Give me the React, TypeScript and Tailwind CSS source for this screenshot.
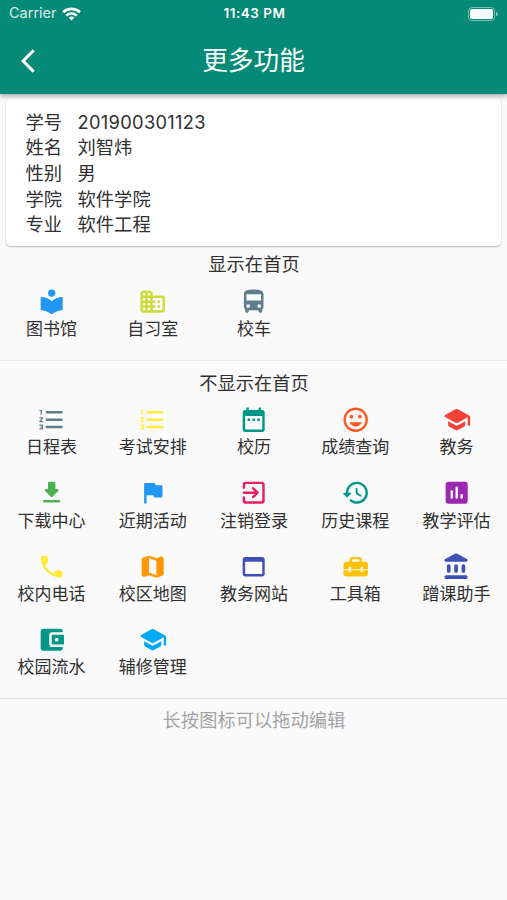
import type { ComponentType } from "react";
import {
  MdArrowBackIosNew,
  MdDateRange,
  MdInsertEmoticon,
  MdWebAsset,
} from "react-icons/md";

type IconProps = { className?: string };
type Feature = { label: string; icon: ComponentType<IconProps>; color: string };

/** Builds a 24-unit filled icon with rounded corners. */
function rounded(...paths: string[]) {
  return function RoundedIcon({ className }: IconProps) {
    return (
      <svg className={className} viewBox="0 0 24 24" fill="currentColor">
        {paths.map((d) => (
          <path key={d} d={d} />
        ))}
      </svg>
    );
  };
}

const Library = rounded(
  "M12 8a3 3 0 1 0 0-6 3 3 0 0 0 0 6z",
  "M12 11.55C10.18 9.85 7.6 8.5 4.22 8.11 3.57 8.01 3 8.51 3 9.16v8.83c0 .5.37.91.86.99 2.9.4 5.3 1.4 7.34 2.95.5.38 1.1.38 1.6 0 2.04-1.55 4.44-2.55 7.34-2.95.49-.08.86-.49.86-.99V9.16c0-.65-.57-1.15-1.22-1.05-3.38.39-5.96 1.74-7.78 3.44z",
);
const Building = rounded(
  "M12 7V5c0-1.100-.9-2-2-2H4c-1.100 0-2 .9-2 2v14c0 1.100.9 2 2 2h16c1.100 0 2-.9 2-2V9c0-1.100-.9-2-2-2h-8zM6 19H4v-2h2v2zm0-4H4v-2h2v2zm0-4H4V9h2v2zm0-4H4V5h2v2zm4 12H8v-2h2v2zm0-4H8v-2h2v2zm0-4H8V9h2v2zm0-4H8V5h2v2zm9 12h-7v-2h2v-2h-2v-2h2v-2h-2V9h7c.55 0 1 .45 1 1v8c0 .55-.45 1-1 1zm-1-8h-2v2h2v-2zm0 4h-2v2h2v-2z",
);
const Bus = rounded(
  "M4 16c0 .88.39 1.67 1 2.22v1.28c0 .83.67 1.5 1.5 1.5S8 20.33 8 19.5V19h8v.5c0 .82.67 1.5 1.5 1.5s1.5-.67 1.5-1.5v-1.28c.61-.55 1-1.34 1-2.22V6c0-3.5-3.58-4-8-4s-8 .5-8 4v10zm3.5 1a1.5 1.5 0 1 1 0-3 1.5 1.5 0 0 1 0 3zm9 0a1.5 1.5 0 1 1 0-3 1.5 1.5 0 0 1 0 3zm1.5-6H6V6h12v5z",
);
const NumberedList = rounded(
  "M2 17h2v.5H3v1h1v.5H2v1h3v-4H2v1zm1-9h1V4H2v1h1v3zm-1 3h1.8L2 13.1v.9h3v-1H3.2L5 10.900V10H2v1z",
  "M8 5h12a1 1 0 1 1 0 2H8a1 1 0 1 1 0-2zM8 11h12a1 1 0 1 1 0 2H8a1 1 0 1 1 0-2zM8 17h12a1 1 0 1 1 0 2H8a1 1 0 1 1 0-2z",
);
const School = rounded(
  "M5 13.18v2.81c0 .73.4 1.41 1.04 1.76l5 2.73c.6.33 1.32.33 1.92 0l5-2.73c.64-.35 1.04-1.03 1.04-1.76v-2.81l-6.04 3.3c-.6.33-1.32.33-1.92 0L5 13.18z",
  "M11.04 3.52l-8.43 4.6c-.69.38-.69 1.38 0 1.76l8.43 4.6c.6.33 1.32.33 1.92 0L21 10.09V16c0 .55.45 1 1 1s1-.45 1-1V9.59c0-.37-.2-.7-.52-.88l-9.52-5.19c-.6-.32-1.32-.32-1.92 0z",
);
const Download = rounded(
  "M16.59 9H15V4c0-.55-.45-1-1-1h-4c-.55 0-1 .45-1 1v5H7.41c-.89 0-1.34 1.08-.71 1.71l4.59 4.59c.39.39 1.02.39 1.41 0l4.59-4.59c.63-.63.19-1.71-.7-1.71zM5 19c0 .55.45 1 1 1h12c.55 0 1-.45 1-1s-.45-1-1-1H6c-.55 0-1 .45-1 1z",
);
const Flag = rounded(
  "M14.4 6l-.24-1.2c-.09-.46-.5-.8-.98-.8H6c-.55 0-1 .45-1 1v15c0 .55.45 1 1 1s1-.45 1-1v-6h5.6l.24 1.2c.09.47.5.8.98.8H19c.55 0 1-.45 1-1V7c0-.55-.45-1-1-1h-4.6z",
);
const Exit = rounded(
  "M10.79 16.29c.39.39 1.02.39 1.41 0l3.59-3.59c.39-.39.39-1.02 0-1.41L12.2 7.7c-.39-.39-1.02-.39-1.41 0s-.39 1.02 0 1.41L12.67 11H4c-.55 0-1 .45-1 1s.45 1 1 1h8.67l-1.88 1.88c-.39.39-.38 1.03 0 1.41z",
  "M19 3H5c-1.110 0-2 .9-2 2v3c0 .55.45 1 1 1s1-.45 1-1V6c0-.55.45-1 1-1h12c.55 0 1 .45 1 1v12c0 .55-.45 1-1 1H6c-.55 0-1-.45-1-1v-2c0-.55-.45-1-1-1s-1 .45-1 1v3c0 1.100.9 2 2 2h14c1.100 0 2-.9 2-2V5c0-1.100-.9-2-2-2z",
);
const History = rounded(
  "M13.26 3C8.17 2.86 4 6.95 4 12H2.21c-.45 0-.67.54-.35.85l2.79 2.8c.2.2.51.2.71 0l2.79-2.8c.31-.31.09-.85-.36-.85H6c0-3.9 3.18-7.05 7.1-7 3.72.05 6.85 3.18 6.9 6.9.05 3.91-3.1 7.1-7 7.1-1.61 0-3.1-.55-4.28-1.48-.4-.31-.96-.28-1.32.08-.42.42-.39 1.13.08 1.49C9 20.29 10.91 21 13 21c5.05 0 9.14-4.17 9-9.26-.13-4.69-4.05-8.61-8.74-8.74z",
  "M12.75 8c-.41 0-.75.34-.75.75v3.68c0 .35.19.68.49.86l3.12 1.85c.36.21.82.09 1.03-.26.21-.36.09-.82-.26-1.03l-2.88-1.71V8.750c0-.41-.34-.75-.75-.75z",
);
const Chart = rounded(
  "M19 3H5c-1.100 0-2 .9-2 2v14c0 1.100.9 2 2 2h14c1.100 0 2-.9 2-2V5c0-1.100-.9-2-2-2zM8 17c-.55 0-1-.45-1-1v-5c0-.55.45-1 1-1s1 .45 1 1v5c0 .55-.45 1-1 1zm4 0c-.55 0-1-.45-1-1V8c0-.55.45-1 1-1s1 .45 1 1v8c0 .55-.45 1-1 1zm4 0c-.55 0-1-.45-1-1v-2c0-.55.45-1 1-1s1 .45 1 1v2c0 .55-.45 1-1 1z",
);
const Phone = rounded(
  "M19.23 15.26l-2.54-.29c-.61-.07-1.21.14-1.64.57l-1.84 1.84c-2.83-1.44-5.15-3.75-6.59-6.59l1.85-1.85c.43-.43.64-1.03.57-1.64l-.29-2.52c-.12-1.01-.97-1.77-1.99-1.77H5.03c-1.13 0-2.07.94-2 2.07.53 8.54 7.36 15.36 15.89 15.89 1.13.07 2.07-.87 2.07-2v-1.73c.01-1.01-.75-1.86-1.76-1.98z",
);
const CampusMap = rounded(
  "M14.65 4.98l-5-1.75c-.42-.15-.88-.15-1.3-.01L4.36 4.56C3.55 4.84 3 5.6 3 6.46v11.85c0 1.41 1.41 2.37 2.72 1.86l2.93-1.14c.22-.09.47-.09.69-.01l5 1.75c.42.15.88.15 1.3.01l3.99-1.34c.81-.27 1.36-1.04 1.36-1.9V5.69c0-1.41-1.41-2.37-2.72-1.86l-2.93 1.14c-.22.08-.46.09-.69.01zM15 18.89l-6-2.11V5.11l6 2.11v11.67z",
);
const Toolbox = rounded(
  "M18 15.5c0 .55-.45 1-1 1s-1-.45-1-1V15H8v.5c0 .55-.45 1-1 1s-1-.45-1-1V15H2v3c0 1.100.9 2 2 2h16c1.100 0 2-.9 2-2v-3h-4v.5z",
  "M20 8h-3V6c0-1.100-.9-2-2-2H9c-1.100 0-2 .9-2 2v2H4c-1.100 0-2 .9-2 2v4h4v-1c0-.55.45-1 1-1s1 .45 1 1v1h8v-1c0-.55.45-1 1-1s1 .45 1 1v1h4v-4c0-1.100-.9-2-2-2zm-5 0H9V6h6v2z",
);
const Institution = rounded(
  "M4 11.5v4a1.500 1.500 0 0 0 3 0v-4a1.500 1.500 0 0 0-3 0zM10 11.500v4a1.500 1.500 0 0 0 3 0v-4a1.500 1.500 0 0 0-3 0zM16 11.500v4a1.500 1.500 0 0 0 3 0v-4a1.500 1.500 0 0 0-3 0zM3.500 22h16a1.500 1.500 0 0 0 0-3h-16a1.500 1.500 0 0 0 0 3z",
  "M10.57 1.49l-7.9 4.16c-.41.21-.67.64-.67 1.1C2 7.44 2.56 8 3.25 8h16.5C20.44 8 21 7.44 21 6.75c0-.46-.26-.89-.67-1.100l-7.9-4.16c-.58-.31-1.28-.31-1.86 0z",
);
const Wallet = rounded(
  "M10 16V8c0-1.100.89-2 2-2h9V5c0-1.100-.9-2-2-2H5c-1.110 0-2 .9-2 2v14c0 1.100.89 2 2 2h14c1.100 0 2-.9 2-2v-1h-9c-1.110 0-2-.9-2-2z",
  "M13 8c-.55 0-1 .45-1 1v6c0 .55.45 1 1 1h9V8h-9zm3 5.5a1.5 1.5 0 1 1 0-3 1.5 1.5 0 0 1 0 3z",
);

const shown: Feature[] = [
  { label: "图书馆", icon: Library, color: "text-[#2196f3]" },
  { label: "自习室", icon: Building, color: "text-[#cddc39]" },
  { label: "校车", icon: Bus, color: "text-[#607d8b]" },
];

const hidden: Feature[] = [
  { label: "日程表", icon: NumberedList, color: "text-[#607d8b]" },
  { label: "考试安排", icon: NumberedList, color: "text-[#ffeb3b]" },
  { label: "校历", icon: MdDateRange, color: "text-[#009688]" },
  { label: "成绩查询", icon: MdInsertEmoticon, color: "text-[#ff5722]" },
  { label: "教务", icon: School, color: "text-[#f44336]" },
  { label: "下载中心", icon: Download, color: "text-[#4caf50]" },
  { label: "近期活动", icon: Flag, color: "text-[#2196f3]" },
  { label: "注销登录", icon: Exit, color: "text-[#e91e63]" },
  { label: "历史课程", icon: History, color: "text-[#009688]" },
  { label: "教学评估", icon: Chart, color: "text-[#9c27b0]" },
  { label: "校内电话", icon: Phone, color: "text-[#ffeb3b]" },
  { label: "校区地图", icon: CampusMap, color: "text-[#ff9800]" },
  { label: "教务网站", icon: MdWebAsset, color: "text-[#3f51b5]" },
  { label: "工具箱", icon: Toolbox, color: "text-[#ffc107]" },
  { label: "蹭课助手", icon: Institution, color: "text-[#3f51b5]" },
  { label: "校园流水", icon: Wallet, color: "text-[#009688]" },
  { label: "辅修管理", icon: School, color: "text-[#03a9f4]" },
];

const profile = [
  ["学号", "201900301123"],
  ["姓名", "刘智炜"],
  ["性别", "男"],
  ["学院", "软件学院"],
  ["专业", "软件工程"],
];

function FeatureGrid({ items }: { items: Feature[] }) {
  return (
    <div className="grid grid-cols-5 pl-px">
      {items.map(({ label, icon: Icon, color }) => (
        <div key={label} className="flex h-[73.3px] flex-col items-center">
          <Icon className={`size-[29.4px] ${color}`} />
          <span className="mt-px text-[17px] leading-[24px] whitespace-nowrap">{label}</span>
        </div>
      ))}
    </div>
  );
}

function StatusBar() {
  return (
    <div className="grid h-[27px] grid-cols-3 items-center px-[9px] text-[14px] leading-none">
      <div className="flex items-center gap-[5px]">
        <span className="text-[14.5px] text-white/85">Carrier</span>
        <svg className="h-[14px] w-[19px]" viewBox="0 0 19 14" fill="none" stroke="white" strokeWidth="2.6">
          <path d="M1 5.2C5.7.7 13.3.7 18 5.2" />
          <path d="M4.2 8.6c3-2.8 7.6-2.8 10.6 0" />
          <path d="M9.5 13.5 6.6 10.7c1.6-1.5 4.2-1.5 5.8 0z" fill="white" stroke="none" />
        </svg>
      </div>
      <span className="pt-px pl-[2px] text-center text-[13.5px] font-semibold tracking-[0.5px]">11:43 PM</span>
      <div className="flex items-center justify-end gap-px">
        <div className="h-[14px] w-[27px] rounded-[4px] border border-white/45 p-px">
          <div className="h-full rounded-[2px] bg-white" />
        </div>
        <div className="h-[4px] w-[2px] rounded-r-full bg-white/50" />
      </div>
    </div>
  );
}

export default function App() {
  return (
    <div className="h-[900px] w-[507px] overflow-hidden bg-[#fafafa] font-[Inter,'Noto_Sans_CJK_SC',sans-serif] text-[#303030]">
      <header className="relative h-[94px] bg-[#048a76] text-white shadow-[0_2px_5px_rgba(0,0,0,0.35)]">
        <StatusBar />
        <div className="grid h-[67px] grid-cols-[60px_1fr_60px] items-center">
          <MdArrowBackIosNew className="ml-[14px] size-[28px]" />
          <h1 className="pt-px text-center text-[25.7px] leading-none">更多功能</h1>
        </div>
      </header>

      <section className="mx-[6px] mt-[5px] h-[147px] rounded-[5px] bg-white pt-[10px] pl-[19.5px] shadow-[0_1px_2px_rgba(0,0,0,0.28)]">
        {profile.map(([name, value]) => (
          <div key={name} className="flex h-[25.7px] items-center gap-[15.5px] text-[18.3px] leading-none">
            <span>{name}</span>
            <span className={/^\d+$/.test(value) ? "tracking-[0.3px]" : ""}>{value}</span>
          </div>
        ))}
      </section>

      <h2 className="mt-[5px] pl-px text-center text-[18.3px] leading-[27px]">显示在首页</h2>
      <div className="mt-[9px] h-[73px]">
        <FeatureGrid items={shown} />
      </div>

      <div className="border-t border-[#ebebeb] pt-[9px]">
        <h2 className="pl-px text-center text-[18.3px] leading-[27px]">不显示在首页</h2>
        <div className="mt-[8px]">
          <FeatureGrid items={hidden} />
        </div>
      </div>

      <p className="border-t border-[#e2e2e2] pt-[8px] pl-px text-center text-[18.3px] leading-[27px] text-[#a4a4a4]">
        长按图标可以拖动编辑
      </p>
    </div>
  );
}
